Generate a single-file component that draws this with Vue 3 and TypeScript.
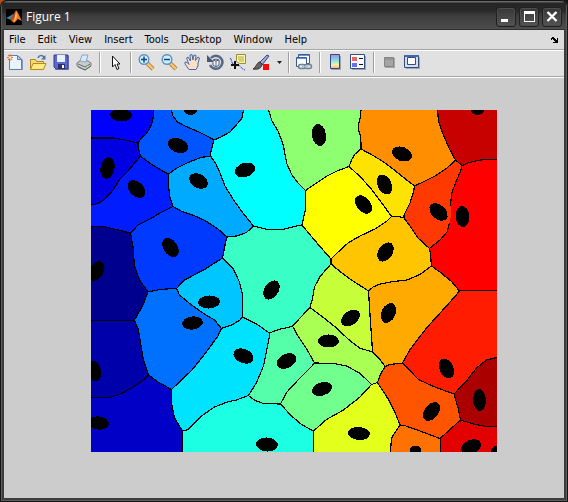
<script setup lang="ts">
type Point = [number, number]
interface Region { fill: string; path: string }
interface Nucleus { x: number; y: number; rx: number; ry: number; angle: number }

const menus = ['File', 'Edit', 'View', 'Insert', 'Tools', 'Desktop', 'Window', 'Help']

// Cell walls: each is shared by the regions on either side of it.
const walls: Record<string, string> = {
  a1: '153.5,110 153,119 150.5,127 146,134 141,138.5 138,143',
  a2: '138,143 138,147 140.5,156',
  a3: '91,138 113,138 123,139.5 131,141.5 138,143',
  b: '140.5,156 128,171 120,179 113,190 105,199 98,203.5 91,205',
  c: '140.5,156 151,164 160,169.5 168.5,174',
  d: '171.5,110 173,116 177.5,122 185,126 198,131.5 208,136.5 214,140',
  e: '214,140 211,151 210.5,156',
  f: '210.5,156 201,157.5 188,162.5 176,168.5 168.5,174',
  g: '168.5,174 168.5,186 170,198 173,206.5',
  h: '173,206.5 160,213 150,219 138,225 130.5,233',
  i: '130.5,233 121,230.5 111,228.5 103,226.5 91,226.5',
  j: '173,206.5 181,211 195,216 205,220.5 218,229 227,237',
  k: '214,140 220,137.5 230,132 238,123 242,118 243.5,110',
  l: '210.5,156 216,164 220,173 225,186 233,199 240,209 248.5,220 253.5,226',
  m: '253.5,226 246.5,232.5 236.5,236 227,237',
  n: '253.5,226 267,229.5 283,229.5 298,225.5 302,225',
  o: '268.5,110 272,121 278,131 283,144 287,164 292,175 298,183 305.5,190.5',
  p: '305.5,190.5 305.5,209 302,225',
  q: '305.5,190.5 315,184 327,176 337,171 349,166.5',
  r: '349,166.5 352,159 355,154 361,149',
  r2: '361,110 360.5,117 358.5,124 358.5,130 360.5,136 361,143 361,149',
  s: '361,149 373,155.5 383,161.5 393,169 403,177 414.5,186',
  t: '437.5,110 438.5,121 443,134 449,148 455.5,160',
  u: '455.5,160 447,168 435,176 423,182 414.5,186',
  v: '455.5,160 462,165.5',
  w: '462,165.5 468,163 477,160.5 485,159.5 497,159.5',
  x1: '462,165.5 461,170 455.5,183 451.5,194 450.5,206',
  x2: '450.5,206 451.5,213 449.5,223',
  x3: '449.5,223 447,232 440,240 429.5,248.5',
  y1: '414.5,186 413.5,192 410,203 404,215 404,218',
  y2: '404,218 410,226 418,238 429.5,248.5',
  z: '404,218 399,216.5 391.5,216.5',
  aa: '349,166.5 360,176.5 370,187.5 381.5,202.5 391.5,216.5',
  bb: '391.5,216.5 387,221 375,229 360,236 348,243 337,253 331,259',
  cc: '302,225 311.5,236.5 320,246.5 331,259',
  cd: '331,259 331,264',
  dd: '331,264 340,271.5 351.5,280 360,285.5 368.5,291',
  ee: '368.5,291 373,287 380,284 393,281.5 407,280 420,274.5 431.5,266',
  ff: '429.5,248.5 430.5,255 431.5,266',
  gg: '431.5,266 440,272 451.5,281.5 459.5,291',
  hh: '459.5,290.5 497,290.5',
  ii: '459.5,291 455,296.5 441.5,311.5 426.5,328 410,349.5 402.5,363',
  jj: '368.5,291 369.5,306.5 370.5,323 371.5,336 372.5,352',
  j2: '372.5,352 380,359.5 385,366.5',
  kk: '402.5,363 390,364.5 385,366.5',
  ll: '331,264 320,276.5 314.5,287 312.5,298.5 310,307.5',
  mm: '310,307.5 326.5,320 336.5,328 348,339 359.5,348 372.5,352',
  nn: '310,307.5 301.5,316.5 292.5,326',
  oo: '292.5,326 298,336 307,349.5 314.5,363',
  pp: '292.5,326 288,327.5 280,329 269.5,333',
  qq: '227,237 226,240 224,250 222.5,258',
  rr: '222.5,258 233,268.5 239.5,282 242.5,294 242.5,317',
  ss: '242.5,317 256.5,324 269.5,333',
  tt: '242.5,317 240,320 231.5,325 221.5,328.5',
  uu: '222.5,258 204.5,269.5 184.5,280 176.5,288.5',
  vv: '176.5,288.5 179.5,295 191.5,305 204.5,314 214.5,320 221.5,328.5',
  ww: '176.5,288.5 173,288.5 159.5,289.5 148,292',
  xx: '130.5,233 133,246.5 134.5,266.5 139.5,280 148,292',
  yy: '148,292 143,305 134.5,320',
  zz: '91,320.5 126,320.5 134.5,320.5',
  ab: '134.5,320.5 138,328.5 139.5,336 143,358 148.5,375',
  ac: '148.5,375 145.5,378.5 131.5,388 121.5,393.5 109.5,397.5 91,397.5',
  ad: '148.5,375 158,382 171.5,389.5',
  ae: '221.5,328.5 218,336 204.5,354.5 191.5,370.5 171.5,389.5',
  af: '171.5,389.5 171.5,402.5 174.5,418 182.5,431',
  ag: '182.5,431 182.5,452',
  ah: '182.5,431 188,429.5 201.5,416 214.5,407 227.5,402 236.5,400 248.5,395.5',
  ai: '269.5,333 269.5,336 263.5,366 256.5,382.5 248.5,395.5',
  aj: '248.5,395.5 255,400.5 263.5,403.5 280.5,404',
  ak: '314.5,363 311.5,366.5 298.5,379.5 286.5,392.5 280.5,404',
  al: '280.5,404 291.5,416 301.5,424.5 313.5,431',
  am: '313.5,431 313.5,452',
  an: '314.5,363 333.5,363.5 346.5,366 359.5,373 366.5,379.5 371.5,384.5',
  ao: '371.5,384.5 360,397 343.5,410 326.5,419.5 313.5,431',
  ap: '371.5,384.5 377.5,382.5',
  aq: '385,366.5 380.5,374.5 377.5,382.5',
  ar: '377.5,382.5 388.5,399.5 395,412.5 400,425',
  as: '400,425 391.5,438 390.5,452',
  at: '400,425 404.5,425.5 420,431 440,438.5',
  au: '440.5,438.5 440.5,452',
  av: '440,438.5 450,429.5 460.5,420',
  aw: '460.5,420 473.5,424 486.5,426.5 497,426.5',
  ax: '460.5,420 458.5,409.5 454,394',
  ay: '454,394 466.5,381 476.5,368 486.5,360 497,357.5',
  az: '402.5,363 418.5,379.5 433.5,386.5 454,394',
  // Corners of the axes
  NW: '91,110', NE: '497,110', SW: '91,452', SE: '497,452',
}

// Walls in drawing order; a leading minus walks the wall backwards.
const cells: [string, string][] = [
  ['#0000ff', 'NW a1 -a3'],
  ['#0000e3', 'a3 a2 b'],
  ['#0055ff', '-a1 d e f -c -a2'],
  ['#008dff', '-d -k'],
  ['#001cff', '-b c g h i'],
  ['#00aaff', '-f l m -j -g'],
  ['#00ffff', 'k o p -n -l -e'],
  ['#8eff71', '-o r2 -r -q'],
  ['#ff8e00', '-r2 t u -s'],
  ['#c70000', '-t NE -w -v'],
  ['#ffff00', 'q aa bb -cc -p'],
  ['#ffe300', 'r s y1 z -aa'],
  ['#ff3900', '-u v x1 x2 x3 -y2 -y1'],
  ['#ff0000', 'w -hh -gg -ff -x3 -x2 -x1'],
  ['#ffc600', '-z y2 ff -ee -dd -cd -bb'],
  ['#0039ff', 'j qq uu ww -xx -h'],
  ['#00008f', '-i xx yy -zz'],
  ['#00c6ff', '-uu rr tt -vv'],
  ['#39ffc6', 'n cc cd ll nn pp -ss -rr -qq -m'],
  ['#c6ff39', 'dd jj -mm -ll'],
  ['#ffaa00', 'ee gg ii kk -j2 -jj'],
  ['#ff1c00', 'hh -ay -az -ii'],
  ['#0000aa', 'zz ab ac'],
  ['#0071ff', '-ww vv ae -ad -ab -yy'],
  ['#00e3ff', '-tt ss ai -ah -af -ae'],
  ['#55ffaa', '-pp oo ak -aj -ai'],
  ['#aaff55', 'mm j2 aq -ap -an -oo -nn'],
  ['#71ff8e', 'an ao -al -ak'],
  ['#0000c7', '-ac ad af ag SW'],
  ['#1cffe3', 'ah aj al am -ag'],
  ['#e3ff1c', 'ap ar as -am -ao'],
  ['#ff5500', '-kk az -ax -av -at -ar -aq'],
  ['#ff7100', 'at au -as'],
  ['#aa0000', 'ay -aw ax'],
  ['#e30000', 'av aw SE -au'],
]

function points(key: string): Point[] {
  const back = key.startsWith('-')
  const list = walls[back ? key.slice(1) : key]
    .split(' ')
    .map((p) => p.split(',').map(Number) as Point)
  return back ? list.reverse() : list
}

const regions: Region[] = cells.map(([fill, keys]) => ({
  fill,
  path: keys.split(' ').flatMap(points).map((p) => p.join(',')).join(' '),
}))

const wallLines = Object.entries(walls)
  .filter(([key]) => key !== 'x2')
  .map(([, line]) => line)

const nuclei: Nucleus[] = (
  [
    [121, 115, 11, 6.5, 3], [190.5, 110, 6.5, 5, 0], [178, 145.5, 10.5, 7, 20],
    [107.5, 168, 11, 7, -78], [136.5, 189, 10.5, 7, 45], [198.5, 181, 10, 7, 30],
    [245, 170, 10.5, 7, -18], [319, 135, 11, 7, 80], [402, 154, 10.5, 7, 20],
    [384.5, 184.5, 10.5, 7, 65], [363.5, 204.5, 10.5, 7, 50], [438.5, 212, 10.5, 7, 42],
    [462.5, 216.5, 10.5, 7, 85], [477.5, 110, 6.5, 5, 0], [170.5, 247.5, 10.5, 7, 55],
    [96.5, 271, 10.5, 7, -60], [209, 302, 11, 6.5, -4], [192.5, 323, 10.5, 6.5, -8],
    [271.5, 290, 10.5, 7, -55], [350.5, 318, 10.5, 7, -35], [328.5, 341, 10.5, 6.5, 2],
    [385.5, 252, 10.5, 7, -55], [388.5, 313, 10.5, 7, -65], [94.5, 371, 10.5, 6.5, 78],
    [98.5, 423, 10.5, 6.5, 8], [243.5, 356, 10.5, 7, 22], [286.5, 361, 10.5, 7, -26],
    [322, 389, 10.5, 6.5, -18], [267, 444.5, 11, 7, 4], [359, 433.5, 11, 6.5, 5],
    [446.5, 368.5, 10.5, 7, 65], [431.5, 411.5, 10.5, 7, -52], [479.5, 400, 11, 6.5, 88],
    [471, 447, 10.5, 7, -25], [415.5, 450.5, 5.5, 5, 0], [497, 451, 6, 5, 0],
  ] as const
).map(([x, y, rx, ry, angle]) => ({ x, y, rx, ry, angle }))
</script>

<template>
  <main class="window">
    <header class="titlebar">
      <svg class="logo" viewBox="0 0 16 16" aria-hidden="true">
        <rect width="16" height="16" fill="#000" />
        <path d="M0 9 4 7 7 5 8 7 5 11 3 10Z" fill="#2f8fb5" />
        <path d="M4 10 7 6 10 1 9 9 6 13 5 11Z" fill="#b8451c" />
        <path d="M10 1 12 4 16 12 12 10 8 14 6 12 9 8Z" fill="#ed7a22" />
        <path d="M10 2 11 7 9 12 8 13 9 7Z" fill="#ffc35a" />
      </svg>
      <h1>Figure 1</h1>
      <div class="controls">
        <button aria-label="Minimize"><svg viewBox="0 0 18 18"><path d="M4 11h7v3H4z" fill="#fff" /></svg></button>
        <button aria-label="Maximize"><svg viewBox="0 0 18 18"><path d="M4 3h11v11H4zM5 6v7h9V6z" fill="#fff" fill-rule="evenodd" /></svg></button>
        <button aria-label="Close"><svg viewBox="0 0 18 18"><path d="M4.500 4 13.500 13M13.500 4 4.500 13" stroke="#fff" stroke-width="2.400" /></svg></button>
      </div>
    </header>

    <section class="client">
      <nav class="menubar">
        <button v-for="menu in menus" :key="menu">{{ menu }}</button>
        <button class="dock" aria-label="Dock figure">
          <svg viewBox="0 0 8 6" shape-rendering="crispEdges"><path d="M0 1h1V0h2v1h1v1h1v1h1V1h1v5H2V5h2V4H3V3H2V2H1v1H0z" /></svg>
        </button>
      </nav>

      <div class="toolbar" role="toolbar" aria-label="Figure toolbar">
        <button aria-label="New Figure"><svg viewBox="0 0 17 17">
          <path d="M3 2h9l4 4v10H3z" fill="#8799b5" /><path d="M2.500 1.500h8l4 4v10h-12z" fill="#eaf4ff" stroke="#5c7fb2" /><path d="M10.500 1.500v4h4z" fill="#b8d1f0" stroke="#5c7fb2" />
          <path d="M3 0v7M0 3.500h6M1 1l4 5M5 1 1 6" stroke="#dd6740" /><circle cx="3" cy="3.500" r="1.200" fill="#fff2b0" />
        </svg></button>
        <button aria-label="Open File"><svg viewBox="0 0 17 17">
          <path d="M.5 14.500v-9h5l1 2h7v7z" fill="#f5dc70" stroke="#ad8523" /><path d="M3 9.500h13l-2.500 6H.500z" fill="#ffe981" stroke="#b28a20" />
          <path d="M8 4c1-3 4-3 6-1" fill="none" stroke="#526f9e" stroke-width="1.500" /><path d="M15.500 1v4.500H11z" fill="#526f9e" />
        </svg></button>
        <button aria-label="Save Figure"><svg viewBox="0 0 17 17">
          <path d="M2 2h14v14H2z" fill="#8d91a8" /><path d="M1 1h14v14H3l-2-2z" fill="#5e67d2" stroke="#343990" /><path d="M4 1h8v7H4z" fill="#e6f3ff" /><path d="M5 10h7v5H5z" fill="#292f73" /><path d="M9 11h2v3H9z" fill="#fff" />
        </svg></button>
        <button aria-label="Print Figure"><svg viewBox="0 0 17 17">
          <path d="m1 9 4-3 7 1 3 2v3l-6 4-8-4z" fill="#c9ccce" stroke="#777c81" /><path d="M4 7 6 1h6l-2 7z" fill="#d5e9fa" stroke="#8ba6c2" /><path d="m2 10 7 3 5-3M2 13l7 3 6-4" fill="none" stroke="#676c70" /><path d="m10 12 3-1" stroke="#80aa70" />
        </svg></button>
        <span class="separator"></span>
        <button aria-label="Edit Plot"><svg viewBox="0 0 17 17">
          <path d="M5.500 2v11l2.500-2.500 2 5 2-1-2-4.500H13z" fill="#fff" stroke="#111" />
        </svg></button>
        <span class="separator"></span>
        <button aria-label="Zoom In"><svg viewBox="0 0 17 17">
          <path d="m9 9 6 6" stroke="#99734a" stroke-width="4" /><path d="m9 9 6 6" stroke="#ffc45f" stroke-width="2.500" /><circle cx="6" cy="5.500" r="4.800" fill="#c8f3fa" stroke="#6891c3" stroke-width="1.500" /><path d="M3 5.500h6M6 2.500v6" stroke="#18417a" stroke-width="1.500" />
        </svg></button>
        <button aria-label="Zoom Out"><svg viewBox="0 0 17 17">
          <path d="m9 9 6 6" stroke="#99734a" stroke-width="4" /><path d="m9 9 6 6" stroke="#ffc45f" stroke-width="2.500" /><circle cx="6" cy="5.500" r="4.800" fill="#c8f3fa" stroke="#6891c3" stroke-width="1.500" /><path d="M3 5.500h6" stroke="#18417a" stroke-width="1.500" />
        </svg></button>
        <button aria-label="Pan"><svg viewBox="0 0 17 17">
          <path d="M5 15.500 1 10V8l2 .500 2 2L2.500 4 4 3l2.500 4L6 1l2-.500L9 6l1-5 2 .500-.500 5L14 3l1.500 1L14 9v3l-2 3.500z" fill="#ffe0c5" stroke="#4267ad" />
        </svg></button>
        <button aria-label="Rotate 3D"><svg viewBox="0 0 17 17">
          <path d="M4 4a6.500 6.500 0 1 1-1 7" fill="none" stroke="#586987" stroke-width="2.600" /><path d="M0 1v7h7z" fill="#455977" /><path d="m6 6 3-1 3 1v5l-3 2-3-2zm0 0 3 1 3-1M9 7v6" fill="#f5f8ff" stroke="#53627f" />
        </svg></button>
        <button aria-label="Data Cursor"><svg viewBox="0 0 17 17">
          <path d="M0 4c2 1 1 5 4 7s5-1 7 2 2 2 4 3" fill="none" stroke="#2438ff" stroke-dasharray="3 1" /><path d="M6.500.5h9v9h-6l-3-2z" fill="#fff8a6" stroke="#938c38" /><path d="M8 3h6M8 5h6M9 7h5" stroke="#aaa451" /><path d="M1 11h8M5 7v8" stroke="#111" stroke-width="2" />
        </svg></button>
        <button aria-label="Brush Data"><svg viewBox="0 0 17 17">
          <path d="m6 9 8-8 2 1-7 9z" fill="#9aa9dc" stroke="#404879" /><path d="M7 8c-3 0-3 4-7 7 5 1 9-1 9-5z" fill="#626466" stroke="#333" /><path d="M10 10h6v6h-6z" fill="#ff0505" />
        </svg></button>
        <button class="arrow" aria-label="Brush options"><svg viewBox="0 0 5 3"><path d="M0 0h5L2.500 3z" fill="#222" /></svg></button>
        <span class="separator"></span>
        <button aria-label="Link Plot"><svg viewBox="0 0 17 17">
          <path d="M2.500.5h11v9h-11z" fill="#fbfcff" stroke="#365c98" /><path d="M3 1h10v1H3z" fill="#6c93ce" />
          <path d="M.5 3.500h10v9H.5z" fill="#fbfcff" stroke="#365c98" /><path d="M1 4h9v1H1z" fill="#6c93ce" />
          <rect x="2.500" y="10.500" width="7" height="4" rx="2" fill="#e1e1e1" stroke="#6e8296" stroke-width="1.500" />
          <rect x="8.500" y="10.500" width="7" height="4" rx="2" fill="#e1e1e1" stroke="#6e8296" stroke-width="1.500" />
          <path d="M6 12.500h6" stroke="#a9bccb" stroke-width="1.500" />
        </svg></button>
        <span class="separator"></span>
        <button aria-label="Insert Colorbar"><svg viewBox="0 0 17 17">
          <defs><linearGradient id="colorbar" x2="0" y2="1"><stop stop-color="#b986d2" /><stop offset=".3" stop-color="#80c8ef" /><stop offset=".55" stop-color="#a9edcb" /><stop offset=".75" stop-color="#fff3a0" /><stop offset="1" stop-color="#ffa18c" /></linearGradient></defs>
          <path d="M4 2h10v14H4z" fill="#9da3aa" /><path d="M3.500.5h9v14h-9z" fill="url(#colorbar)" stroke="#304d83" />
        </svg></button>
        <button aria-label="Insert Legend"><svg viewBox="0 0 17 17">
          <path d="M2 2h14v14H2z" fill="#9da3aa" /><path d="M.5.5h14v14H.5z" fill="#f8faff" stroke="#304d83" /><path d="M2 3h5v4H2z" fill="#ed6464" /><path d="M2 9h5v4H2z" fill="#6470ed" /><path d="M9 4.500h4M9 10.500h4" stroke="#111" />
        </svg></button>
        <span class="separator"></span>
        <button aria-label="Hide Plot Tools"><svg viewBox="0 0 17 17">
          <path d="M4 4h10v10H4z" fill="#a7a7a7" /><path d="M3.500 3.500h9v9h-9z" fill="#a5a5a5" stroke="#858585" /><path d="M4 5h8" stroke="#858585" />
        </svg></button>
        <button aria-label="Show Plot Tools"><svg viewBox="0 0 17 17">
          <path d="M2 3h14v12H2z" fill="#a1a6b0" /><path d="M.5 1.500h14v12H.5z" fill="#d8dce3" stroke="#304d83" /><path d="M1 1h14v2H1z" fill="#4167ad" /><path d="M3.500 3.500h8v7h-8z" fill="#fff" stroke="#304d83" />
        </svg></button>
      </div>

      <figure class="canvas">
        <svg class="plot" viewBox="91 110 406 342" role="img" aria-label="Labelled cell regions" shape-rendering="crispEdges">
          <polygon v-for="region in regions" :key="region.fill" :points="region.path" :fill="region.fill" />
          <polyline v-for="line in wallLines" :key="line" :points="line" fill="none" stroke="#000" stroke-width="1.2" />
          <ellipse
            v-for="n in nuclei"
            :key="`${n.x}-${n.y}`"
            :cx="n.x"
            :cy="n.y"
            :rx="n.rx"
            :ry="n.ry"
            :transform="`rotate(${n.angle} ${n.x} ${n.y})`"
          />
        </svg>
      </figure>
    </section>
  </main>
</template>

<style>
body {
  margin: 0;
  background: linear-gradient(90deg, #b84a10 8px, #111 8px);
}
</style>

<style scoped>
.window {
  box-sizing: border-box;
  min-height: 100vh;
  display: flex;
  flex-direction: column;
  padding: 0 4px 4px;
  border-radius: 7px 7px 0 0;
  background: #3d3d3d;
  box-shadow: inset 0 0 0 1px #151515, inset 0 0 0 2px #5c5c5c;
  font-family: "DejaVu Sans Condensed", "DejaVu Sans", sans-serif;
  font-size: 11px;
  color: #000;
}

button {
  margin: 0;
  padding: 0;
  border: 0;
  background: none;
  font: inherit;
  color: inherit;
}

svg {
  display: block;
}

.titlebar {
  box-sizing: border-box;
  height: 29px;
  display: flex;
  align-items: center;
  gap: 4px;
  margin: 0 -2px;
  padding: 4px 4px 0;
  border-top: 1px solid #151515;
  border-radius: 6px 6px 0 0;
  background: linear-gradient(#686868 1px, #252525 2px, #292929 10px, #3c3c3c 14px, #4d4d4d);
}

.logo {
  width: 16px;
  height: 16px;
}

h1 {
  flex: 1;
  margin: 0;
  font-size: 12px;
  font-weight: 400;
  line-height: 16px;
  font-family: "Open Sans", "Noto Sans", sans-serif;
  color: #fff;
}

.controls {
  display: flex;
  gap: 3px;
}

.controls button {
  width: 20px;
  height: 20px;
  border: 1px solid #202020;
  border-radius: 3px;
  background: linear-gradient(#363636, #555);
  box-shadow: inset 0 0 0 1px #4d4d4d;
}

.client {
  flex: 1;
  display: flex;
  flex-direction: column;
  border-top: 1px solid #303030;
  background: #ccc;
}

.menubar {
  display: flex;
  align-items: center;
  gap: 12px;
  height: 19px;
  padding: 0 5px;
  background: #dcdcdc;
  border-bottom: 1px solid #a6a6a6;
}

.dock {
  margin-left: auto;
}

.dock svg {
  width: 8px;
  height: 6px;
}

.toolbar {
  display: flex;
  align-items: center;
  height: 23px;
  padding-bottom: 2px;
  background: #e1e1e1;
  border-top: 1px solid #fff;
  border-bottom: 1px solid #a6a6a6;
}

.toolbar button {
  width: 23px;
  height: 23px;
  display: grid;
  place-items: center;
}

.toolbar button svg {
  width: 17px;
  height: 17px;
}

.toolbar .arrow {
  width: 12px;
}

.toolbar .arrow svg {
  width: 5px;
  height: 3px;
}

.separator {
  box-sizing: border-box;
  width: 2px;
  height: 21px;
  margin: 0 3px;
  border-left: 1px solid #a0a0a0;
  border-right: 1px solid #fff;
}

.canvas {
  flex: 1;
  margin: 0;
  padding: 32px 67px 45px 87px;
  border-top: 1px solid #fff;
}

.plot {
  width: 100%;
}
</style>
